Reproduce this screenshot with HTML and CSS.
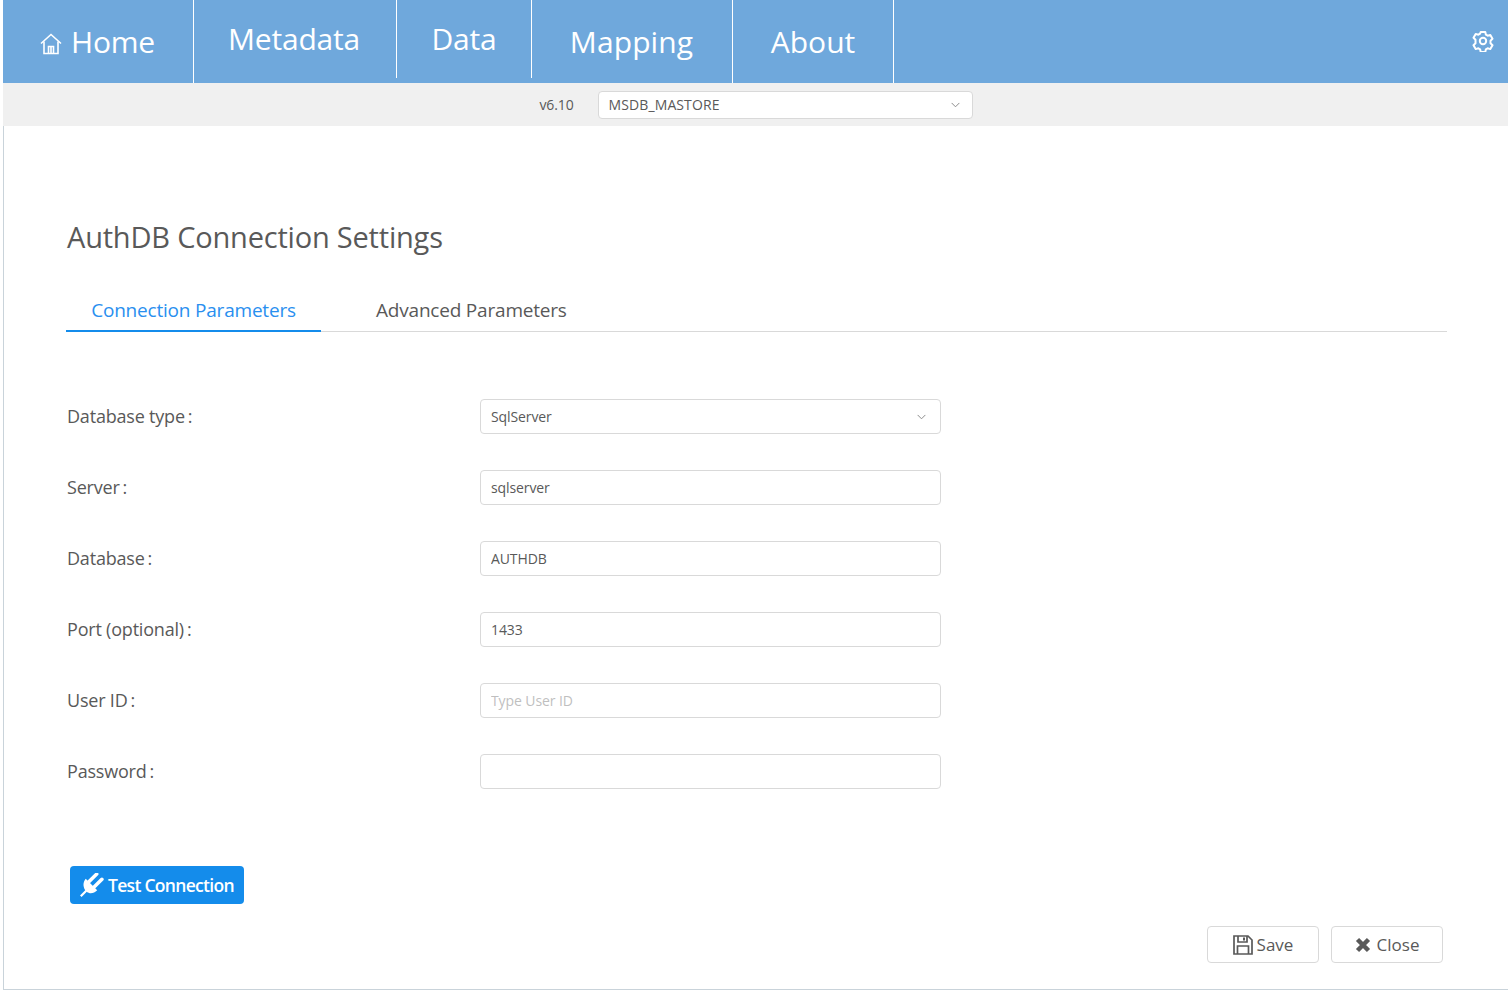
FILE: index.html
```html
<!doctype html>
<html lang="en">
  <head>
    <meta charset="utf-8">
    <meta name="viewport" content="width=device-width, initial-scale=1">
    <title>AuthDB Connection Settings</title>
    <link rel="stylesheet" href="styles.css">
  </head>
  <body>
    <div class="topnav">
      <a class="nav-item nav-home" href="#">
        <svg class="home-icon" viewBox="0 0 22 22" width="22" height="22" fill="none" stroke="#fff" stroke-width="1.6">
          <path d="M1 10.500 11 1.500l10 9"/>
          <path d="M4 8.500V20.500h14V8.500"/>
          <path d="M8.500 20.500v-7h5v7"/>
          <path d="M11 13.500v7"/>
        </svg>
        Home
      </a>
      <a class="nav-item nav-metadata nav-short" href="#">Metadata</a>
      <a class="nav-item nav-data nav-short" href="#">Data</a>
      <a class="nav-item nav-mapping" href="#">Mapping</a>
      <a class="nav-item nav-about" href="#">About</a>
      <a class="nav-settings" href="#">
        <svg viewBox="0 0 22 22" width="22" height="22" fill="none" stroke="#fff" stroke-width="2" stroke-linejoin="round">
          <path d="M8.700 2h4.600l.6 2.700 1.700 1 2.700-.8 2.200 3.900-2 1.900v2.600l2 1.900-2.200 3.900-2.700-.8-1.700 1-.6 2.700H8.700l-.6-2.700-1.700-1-2.700.8-2.200-3.900 2-1.900V9.700l-2-1.900 2.200-3.900 2.700.8 1.700-1z"/>
          <circle cx="11" cy="11" r="3.200"/>
        </svg>
      </a>
    </div>

    <div class="subbar">
      <span class="version">v6.10</span>
      <div class="select select-db">
        <span>MSDB_MASTORE</span>
        <svg class="chevron" viewBox="0 0 10 6" width="9" height="6"><path d="M.7.7 5 5l4.300-4.300"/></svg>
      </div>
    </div>

    <div class="main">
      <h1 class="title">AuthDB Connection Settings</h1>

      <div class="tabs">
        <a class="tab active" href="#">Connection Parameters</a>
        <a class="tab" href="#">Advanced Parameters</a>
      </div>

      <form class="form">
        <div class="row">
          <label>Database type<i>:</i></label>
          <div class="select">
            <span>SqlServer</span>
            <svg class="chevron" viewBox="0 0 10 6" width="9" height="6"><path d="M.7.7 5 5l4.300-4.300"/></svg>
          </div>
        </div>
        <div class="row">
          <label>Server<i>:</i></label>
          <input type="text" value="sqlserver">
        </div>
        <div class="row">
          <label>Database<i>:</i></label>
          <input type="text" value="AUTHDB">
        </div>
        <div class="row">
          <label>Port (optional)<i>:</i></label>
          <input type="text" value="1433">
        </div>
        <div class="row">
          <label>User ID<i>:</i></label>
          <input type="text" placeholder="Type User ID">
        </div>
        <div class="row">
          <label>Password<i>:</i></label>
          <input type="password">
        </div>
      </form>

      <button class="btn-primary" type="button">
        <svg viewBox="0.5 0.5 23 23" width="24" height="24" fill="#fff">
          <path d="M6 6 17 17c-3 3-7 4-10 1.500L2 23.500.5 22l5-5C3 13 3.500 9 6 6z"/>
          <path d="M9 9l7.500-7.500M14 14l7.500-7.500" stroke="#fff" stroke-width="3.400" stroke-linecap="round"/>
        </svg>
        Test Connection
      </button>

      <div class="footer-buttons">
        <button class="btn" type="button">
          <svg viewBox="0 0 20 20" width="20" height="20" fill="none" stroke="#595959" stroke-width="1.700">
            <path d="M1 1h14l4 4v14H1z"/>
            <path d="M5 1v6h9V1"/>
            <path d="M4.500 19v-8h11v8"/>
            <path d="M11 2.500v3" stroke-width="2"/>
          </svg>
          Save
        </button>
        <button class="btn btn-close" type="button">
          <svg viewBox="0 0 16 16" width="16" height="16" fill="none" stroke="#595959" stroke-width="4.500">
            <path d="M2.500 2.500l11 11M13.500 2.500l-11 11"/>
          </svg>
          Close
        </button>
      </div>
    </div>
  </body>
</html>
```

FILE: styles.css
```css
* {
  box-sizing: border-box;
}
body {
  margin: 0 2px 0 3px;
  background: #fff;
  font-family: "Open Sans", "Noto Sans", sans-serif;
  color: #595959;
}
a {
  text-decoration: none;
}
.topnav {
  display: flex;
  align-items: flex-start;
  height: 83px;
  background-color: #6fa8dc;
}
.nav-item {
  display: flex;
  align-items: center;
  justify-content: center;
  height: 83px;
  border-right: 1px solid #fff;
  color: #fff;
  font-size: 30px;
  letter-spacing: -0.2px;
}
.nav-short {
  height: 78px;
  padding-bottom: 2px;
}
.nav-home {
  width: 191px;
  gap: 9px;
  padding-right: 1px;
}
.home-icon {
  margin-top: 5px;
}
.nav-metadata {
  width: 203px;
  padding-right: 2px;
}
.nav-data {
  width: 135px;
}
.nav-mapping {
  width: 201px;
  padding-right: 1px;
  letter-spacing: 0.1px;
}
.nav-about {
  width: 161px;
  letter-spacing: 0;
}
.nav-settings {
  margin: 30px 14px 0 auto;
  height: 22px;
}
.subbar {
  display: flex;
  align-items: center;
  justify-content: center;
  gap: 24px;
  height: 43px;
  background: #f0f0f0;
  padding-left: 1px;
  font-size: 14px;
}
.version {
  letter-spacing: -0.1px;
}
.select {
  display: flex;
  align-items: center;
  justify-content: space-between;
  width: 461px;
  height: 35px;
  padding: 0 14px 0 10px;
  background: #fff;
  border: 1px solid #d9d9d9;
  border-radius: 4px;
  font-size: 14px;
  letter-spacing: -0.1px;
}
.select-db {
  width: 375px;
  height: 28px;
  padding-right: 12px;
  letter-spacing: 0.1px;
}
.chevron {
  fill: none;
  stroke: #8c8c8c;
  stroke-width: 1.100;
}
.main {
  height: 864px;
  padding: 87px 61px 0 62px;
  border-left: 1px solid #c9d3da;
  border-bottom: 1px solid #c9d3da;
}
.title {
  margin: 0 0 26px 1px;
  font-size: 29px;
  font-weight: 400;
  line-height: 48px;
  letter-spacing: -0.2px;
}
.tabs {
  display: flex;
  height: 45px;
  border-bottom: 1px solid #d9d9d9;
}
.tab {
  width: 255px;
  padding-top: 10px;
  text-align: center;
  color: #595959;
  font-size: 19px;
  letter-spacing: -0.2px;
}
.tab + .tab {
  width: auto;
  margin-left: 55px;
}
.tab.active {
  color: #2a8fef;
  height: 45px;
  border-bottom: 2px solid #148ceb;
}
.form {
  display: flex;
  flex-direction: column;
  gap: 36px;
  padding-top: 67px;
}
.row {
  display: flex;
  align-items: center;
  height: 35px;
}
.row label {
  width: 414px;
  padding: 0 0 2px 1px;
  font-size: 18px;
  letter-spacing: -0.2px;
}
.row label i {
  font-style: normal;
  margin-left: 3px;
}
.row input {
  width: 461px;
  height: 35px;
  padding: 0 10px;
  border: 1px solid #d9d9d9;
  border-radius: 4px;
  color: #595959;
  font-family: inherit;
  font-size: 14px;
  letter-spacing: -0.1px;
  outline: none;
}
.row input::placeholder {
  color: #bfbfbf;
}
.btn-primary {
  display: flex;
  align-items: center;
  gap: 4px;
  width: 174px;
  height: 38px;
  margin: 77px 0 0 4px;
  padding: 0 0 0 10px;
  background: #148ceb;
  border: 0;
  border-radius: 4px;
  color: #fff;
  font-family: inherit;
  font-size: 17.500px;
  font-weight: 600;
  letter-spacing: -0.7px;
}
.footer-buttons {
  display: flex;
  justify-content: flex-end;
  gap: 12px;
  margin: 22px 4px 0 0;
}
.btn {
  display: flex;
  align-items: center;
  justify-content: center;
  gap: 4px;
  width: 112px;
  height: 37px;
  background: #fff;
  border: 1px solid #d9d9d9;
  border-radius: 4px;
  color: #595959;
  font-family: inherit;
  font-size: 17px;
  letter-spacing: 0;
}
.btn-close {
  gap: 6px;
}
```
